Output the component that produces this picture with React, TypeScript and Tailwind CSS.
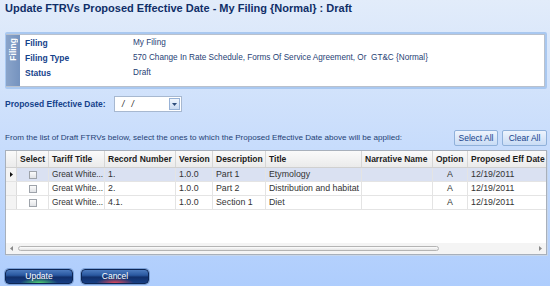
import React from 'react';

const rows = [
  { tariff: 'Great White...', record: '1.', version: '1.0.0', desc: 'Part 1', title: 'Etymology', option: 'A', date: '12/19/2011', active: true },
  { tariff: 'Great White...', record: '2.', version: '1.0.0', desc: 'Part 2', title: 'Distribution and habitat', option: 'A', date: '12/19/2011', active: false },
  { tariff: 'Great White...', record: '4.1.', version: '1.0.0', desc: 'Section 1', title: 'Diet', option: 'A', date: '12/19/2011', active: false },
];

const cols = 'grid grid-cols-[11px_32px_56px_71px_37px_53px_96px_71px_35px_1fr]';

function Checkbox() {
  return <div className="w-[8px] h-[8px] border border-[#9ea3aa] bg-gradient-to-b from-[#fbfbfb] to-[#e1e3e6]" />;
}

function LightButton({ label, w }: { label: string; w: string }) {
  return (
    <button className={`${w} h-[16px] rounded-[2px] border border-[#90b1da] bg-gradient-to-b from-[#eef4fd] to-[#c9dcf5] text-[8.5px] text-[#15428b] leading-none`}>
      {label}
    </button>
  );
}

function GlossButton({ label, glow }: { label: string; glow: string }) {
  return (
    <button className="relative w-[68px] h-[15px] rounded-[4px] border border-[#0d2655] shadow-[0_0_0_1px_#7aa0d8] bg-[linear-gradient(to_bottom,#4d7bbf_0%,#2a58a0_40%,#112f6a_55%,#173f85_100%)] text-white text-[8.5px] leading-none overflow-hidden">
      <span className={`absolute left-[14px] right-[14px] bottom-0 h-[5px] ${glow}`} />
      <span className="relative">{label}</span>
    </button>
  );
}

export default function App() {
  return (
    <div className="w-[550px] h-[286px] overflow-hidden bg-gradient-to-b from-[#e2ecfa] to-[#aecdfd] font-['Liberation_Sans',Arial,sans-serif] flex flex-col">
      <h1 className="pl-[5px] pt-[2px] text-[11px] leading-[13px] font-bold text-[#102f68]">
        Update FTRVs Proposed Effective Date - My Filing {'{Normal}'} : Draft
      </h1>

      {/* filing summary */}
      <div className="mt-[17px] ml-[5px] mr-[3px] border-2 border-l border-[#a9c8f0] rounded-[2px]">
        <div className="flex border border-l-0 border-[#b9c1cd]">
          <div className="w-[14px] bg-gradient-to-r from-[#8aa4ca] to-[#7593bf] flex justify-center items-start pt-[3px]">
            <span className="[writing-mode:vertical-rl] rotate-180 text-white font-bold text-[8.5px] leading-[14px]">Filing</span>
          </div>
          <div className="flex-1 bg-white pt-[1px] pb-[5px] pl-[5px]">
            {[
              ['Filing', 'My Filing'],
              ['Filing Type', '570 Change In Rate Schedule, Forms Of Service Agreement, Or  GT&C {Normal}'],
              ['Status', 'Draft'],
            ].map(([k, v]) => (
              <div key={k} className="flex items-center h-[15px]">
                <span className="w-[108px] text-[8.5px] font-bold text-[#15428b]">{k}</span>
                <span className="text-[8.2px] text-[#1f3f75] whitespace-pre">{v}</span>
              </div>
            ))}
          </div>
        </div>
      </div>

      {/* date */}
      <div className="mt-[7px] pl-[5px] flex items-center h-[16px]">
        <span className="w-[109px] text-[8.5px] font-bold text-[#15428b]">Proposed Effective Date:</span>
        <div className="w-[68px] h-[16px] flex border border-[#a7b8d0] bg-white">
          <span className="flex-1 pl-[7px] text-[8.5px] italic text-[#222] leading-[14px] whitespace-pre">/   /</span>
          <div className="w-[11px] my-[1px] mr-[1px] border border-[#98b2d6] bg-gradient-to-b from-[#f1f6fd] to-[#c9daf2] flex items-center justify-center">
            <svg width="5" height="3" viewBox="0 0 5 3"><path d="M0 0h5L2.5 3z" fill="#2d4b7a" /></svg>
          </div>
        </div>
      </div>

      {/* instruction */}
      <div className="mt-[18px] pl-[5px] mr-[3px] flex items-center h-[16px]">
        <span className="flex-1 text-[8.1px] text-[#1f3f75]">
          From the list of Draft FTRVs below, select the ones to which the Proposed Effective Date above will be applied:
        </span>
        <div className="flex gap-[4px]">
          <LightButton label="Select All" w="w-[44px]" />
          <LightButton label="Clear All" w="w-[45px]" />
        </div>
      </div>

      {/* grid */}
      <div className="mt-[4px] ml-[5px] mr-[3px] h-[105px] border border-[#a8b0bb] bg-white flex flex-col shadow-[1px_1px_0_#c7d6ea]">
        <div className={`${cols} h-[17px] bg-gradient-to-b from-[#fafafa] to-[#ebebeb] border-b border-[#d0d0d0] text-[8.5px] font-bold text-[#1c1c1c]`}>
          {['', 'Select', 'Tariff Title', 'Record Number', 'Version', 'Description', 'Title', 'Narrative Name', 'Option', 'Proposed Eff Date'].map((h, i) => (
            <div key={i} className="flex items-center pl-[3px] border-r border-[#d6d6d6] last:border-r-0 whitespace-nowrap">
              {h}
            </div>
          ))}
        </div>
        {rows.map((r, i) => (
          <div key={i} className={`${cols} h-[14px] border-b border-[#e4e4e4] text-[8.8px] text-[#333] ${r.active ? 'bg-[#dae1f2]' : 'bg-white'}`}>
            <div className="flex items-center justify-center bg-[#f4f4f4] border-r border-[#dcdcdc]">
              {r.active && <svg width="3" height="5" viewBox="0 0 3 5"><path d="M0 0l3 2.5L0 5z" fill="#111" /></svg>}
            </div>
            <div className="flex items-center justify-center border-r border-[#e4e4e4]"><Checkbox /></div>
            <div className="flex items-center pl-[3px] border-r border-[#e4e4e4] whitespace-nowrap text-[8.3px]">{r.tariff}</div>
            <div className="flex items-center pl-[3px] border-r border-[#e4e4e4]">{r.record}</div>
            <div className="flex items-center pl-[3px] border-r border-[#e4e4e4]">{r.version}</div>
            <div className="flex items-center pl-[3px] border-r border-[#e4e4e4]">{r.desc}</div>
            <div className="flex items-center pl-[3px] border-r border-[#e4e4e4] whitespace-nowrap">{r.title}</div>
            <div className="border-r border-[#e4e4e4]" />
            <div className="flex items-center justify-center border-r border-[#e4e4e4]">{r.option}</div>
            <div className="flex items-center pl-[3px]">{r.date}</div>
          </div>
        ))}
        <div className="flex-1" />
        <div className="h-[11px] bg-[#f4f4f4] flex items-center px-[4px]">
          <svg width="3" height="5" viewBox="0 0 3 5"><path d="M3 0L0 2.5 3 5z" fill="#8a8a8a" /></svg>
          <div className="ml-[5px] w-[421px] h-[5px] rounded-full border border-[#b4b4b4] bg-gradient-to-b from-[#fdfdfd] to-[#e4e4e4]" />
          <div className="flex-1" />
          <svg width="3" height="5" viewBox="0 0 3 5"><path d="M0 0l3 2.5L0 5z" fill="#8a8a8a" /></svg>
        </div>
      </div>

      {/* actions */}
      <div className="mt-[14px] pl-[5px] flex gap-[8px]">
        <GlossButton label="Update" glow="bg-[radial-gradient(ellipse_at_bottom,#4fd46f_0%,transparent_70%)]" />
        <GlossButton label="Cancel" glow="bg-[radial-gradient(ellipse_at_bottom,#e0485a_0%,transparent_70%)]" />
      </div>
    </div>
  );
}
